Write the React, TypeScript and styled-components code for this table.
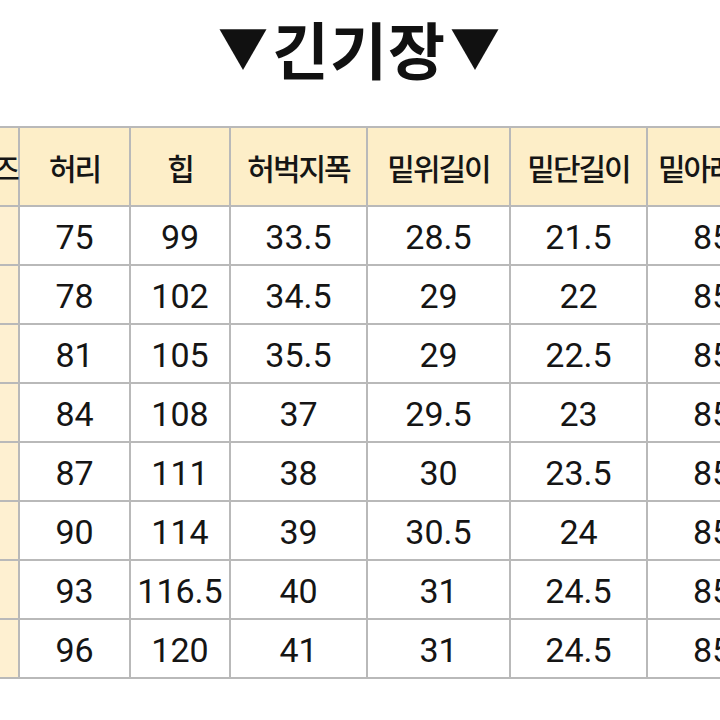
import React from "react";
import styled, { createGlobalStyle } from "styled-components";

const Global = createGlobalStyle`
  html, body { margin: 0; padding: 0; background: #ffffff; }
  body { font-family: Roboto, "Noto Sans CJK KR", sans-serif; color: #141414; }
`;

const Page = styled.div`
  width: 720px;
  height: 720px;
  overflow: hidden;
  background: #ffffff;
  display: flex;
  flex-direction: column;
`;

const Title = styled.h1`
  margin: 0;
  height: 126px;
  display: flex;
  align-items: center;
  justify-content: center;
  gap: 4px;
  padding-bottom: 30px;
  padding-right: 2px;
  box-sizing: border-box;
  font-family: "Noto Sans CJK KR", sans-serif;
  font-weight: 700;
  font-size: 62px;
  letter-spacing: 1px;
  color: #111111;
  line-height: 1;
`;

const Arrow = styled.span`
  font-size: 50px;
  line-height: 1;
  letter-spacing: 0;
  position: relative;
  top: -3px;
`;

const Grid = styled.div`
  display: grid;
  grid-template-columns: 87px 109px 98px 135px 141px 135px 128px;
  grid-template-rows: 77px repeat(8, 57px);
  gap: 2px;
  padding: 2px;
  background: #b9b9b9;
  margin-left: -71px;
  width: max-content;
`;

const HeadCell = styled.div`
  background: #fdeec8;
  display: flex;
  align-items: center;
  justify-content: safe center;
  padding: 0 10px;
  font-family: "Noto Sans CJK KR", sans-serif;
  font-weight: 500;
  font-size: 30px;
  letter-spacing: -2px;
  white-space: nowrap;
  overflow: visible;
  color: #151515;
`;

const Cell = styled.div<{ $side?: boolean }>`
  background: ${(p) => (p.$side ? "#fef0d1" : "#ffffff")};
  display: flex;
  align-items: center;
  justify-content: center;
  padding-top: 2px;
  font-family: Roboto, sans-serif;
  font-size: 34px;
  color: #151515;
  white-space: nowrap;
`;

const headers = ["사이즈", "허리", "힙", "허벅지폭", "밑위길이", "밑단길이", "밑아래길이"];

const rows: string[][] = [
  ["75", "99", "33.5", "28.5", "21.5", "85"],
  ["78", "102", "34.5", "29", "22", "85"],
  ["81", "105", "35.5", "29", "22.5", "85"],
  ["84", "108", "37", "29.5", "23", "85"],
  ["87", "111", "38", "30", "23.5", "85"],
  ["90", "114", "39", "30.5", "24", "85"],
  ["93", "116.5", "40", "31", "24.5", "85"],
  ["96", "120", "41", "31", "24.5", "85"],
];

export default function App() {
  return (
    <Page>
      <Global />
      <Title>
        <Arrow>▼</Arrow>
        <span>긴기장</span>
        <Arrow>▼</Arrow>
      </Title>
      <Grid>
        {headers.map((h) => (
          <HeadCell key={h}>{h}</HeadCell>
        ))}
        {rows.map((r, i) => (
          <React.Fragment key={i}>
            <Cell $side />
            {r.map((v, j) => (
              <Cell key={j}>{v}</Cell>
            ))}
          </React.Fragment>
        ))}
      </Grid>
    </Page>
  );
}
